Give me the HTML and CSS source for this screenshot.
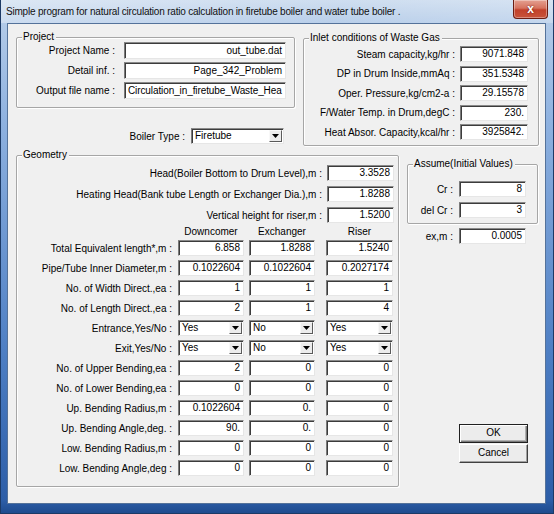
FILE: index.html
```html
<!DOCTYPE html>
<html>
<head>
<meta charset="utf-8">
<title>Natural circulation ratio</title>
<link rel="stylesheet" href="styles.css">
</head>
<body>
<div class="window">
  <div class="titlebar">
    <span class="title">Simple program for natural circulation ratio calculation in firetube boiler and water tube boiler .</span>
    <div class="close"><span>x</span></div>
  </div>
  <div class="client">
    <div class="top">
      <div class="left-col">
        <div class="group project">
          <span class="legend">Project</span>
          <div class="project-form">
            <span class="lbl">Project Name :</span><div class="field">out_tube.dat</div>
            <span class="lbl">Detail inf. :</span><div class="field">Page_342_Problem</div>
            <span class="lbl">Output file name :</span><div class="field left">Circulation_in_firetube_Waste_Hea</div>
          </div>
        </div>
        <div class="boiler-row">
          <span class="lbl">Boiler Type :</span>
          <div class="select boiler"><span class="sel-text">Firetube</span><span class="arrow"><svg width="7" height="4" viewBox="0 0 7 4"><path d="M0 0h7L3.5 4z" fill="#000"/></svg></span></div>
        </div>
      </div>
      <div class="group inlet">
        <span class="legend">Inlet conditions of Waste Gas</span>
        <div class="inlet-form">
          <span class="lbl">Steam capacity,kg/hr :</span><div class="field">9071.848</div>
          <span class="lbl">DP in Drum Inside,mmAq :</span><div class="field">351.5348</div>
          <span class="lbl">Oper. Pressure,kg/cm2-a :</span><div class="field">29.15578</div>
          <span class="lbl">F/Water Temp. in Drum,degC :</span><div class="field">230.</div>
          <span class="lbl">Heat Absor. Capacity,kcal/hr :</span><div class="field">3925842.</div>
        </div>
      </div>
    </div>
    <div class="bottom">
      <div class="group geometry">
        <span class="legend">Geometry</span>
        <div class="heads">
          <div class="head-row"><span class="lbl">Head(Boiler Bottom to Drum Level),m :</span><div class="field hf">3.3528</div></div>
          <div class="head-row"><span class="lbl">Heating Head(Bank tube Length or Exchanger Dia.),m :</span><div class="field hf">1.8288</div></div>
          <div class="head-row"><span class="lbl">Vertical height for riser,m :</span><div class="field hf">1.5200</div></div>
        </div>
        <div class="table">
          <span></span><span class="colh c1">Downcomer</span><span class="colh c2">Exchanger</span><span class="colh c3">Riser</span>

          <span class="lbl">Total Equivalent length*,m :</span><div class="field c1">6.858</div><div class="field c2">1.8288</div><div class="field c3">1.5240</div>
          <span class="lbl">Pipe/Tube Inner Diameter,m :</span><div class="field c1">0.1022604</div><div class="field c2">0.1022604</div><div class="field c3">0.2027174</div>
          <span class="lbl">No. of Width Direct.,ea :</span><div class="field c1">1</div><div class="field c2">1</div><div class="field c3">1</div>
          <span class="lbl">No. of Length Direct.,ea :</span><div class="field c1">2</div><div class="field c2">1</div><div class="field c3">4</div>
          <span class="lbl">Entrance,Yes/No :</span>
          <div class="select c1"><span class="sel-text">Yes</span><span class="arrow"><svg width="7" height="4" viewBox="0 0 7 4"><path d="M0 0h7L3.5 4z" fill="#000"/></svg></span></div>
          <div class="select c2"><span class="sel-text">No</span><span class="arrow"><svg width="7" height="4" viewBox="0 0 7 4"><path d="M0 0h7L3.5 4z" fill="#000"/></svg></span></div>
          <div class="select c3"><span class="sel-text">Yes</span><span class="arrow"><svg width="7" height="4" viewBox="0 0 7 4"><path d="M0 0h7L3.5 4z" fill="#000"/></svg></span></div>
          <span class="lbl">Exit,Yes/No :</span>
          <div class="select c1"><span class="sel-text">Yes</span><span class="arrow"><svg width="7" height="4" viewBox="0 0 7 4"><path d="M0 0h7L3.5 4z" fill="#000"/></svg></span></div>
          <div class="select c2"><span class="sel-text">No</span><span class="arrow"><svg width="7" height="4" viewBox="0 0 7 4"><path d="M0 0h7L3.5 4z" fill="#000"/></svg></span></div>
          <div class="select c3"><span class="sel-text">Yes</span><span class="arrow"><svg width="7" height="4" viewBox="0 0 7 4"><path d="M0 0h7L3.5 4z" fill="#000"/></svg></span></div>
          <span class="lbl">No. of Upper Bending,ea :</span><div class="field c1">2</div><div class="field c2">0</div><div class="field c3">0</div>
          <span class="lbl">No. of Lower Bending,ea :</span><div class="field c1">0</div><div class="field c2">0</div><div class="field c3">0</div>
          <span class="lbl">Up. Bending Radius,m :</span><div class="field c1">0.1022604</div><div class="field c2">0.</div><div class="field c3">0</div>
          <span class="lbl">Up. Bending Angle,deg. :</span><div class="field c1">90.</div><div class="field c2">0.</div><div class="field c3">0</div>
          <span class="lbl">Low. Bending Radius,m :</span><div class="field c1">0</div><div class="field c2">0</div><div class="field c3">0</div>
          <span class="lbl">Low. Bending Angle,deg :</span><div class="field c1">0</div><div class="field c2">0</div><div class="field c3">0</div>
        </div>
      </div>
      <div class="right-col">
        <div class="group assume">
          <span class="legend">Assume(Initial Values)</span>
          <div class="assume-form">
            <span class="lbl">Cr :</span><div class="field">8</div>
            <span class="lbl">del Cr :</span><div class="field">3</div>
          </div>
        </div>
        <div class="ex-row"><span class="lbl">ex,m :</span><div class="field">0.0005</div></div>
        <div class="buttons">
          <div class="btn default">OK</div>
          <div class="btn">Cancel</div>
        </div>
      </div>
    </div>
  </div>
</div>
</body>
</html>
```
FILE: styles.css
```css
html, body {
  margin: 0;
  padding: 0;
  background: #ffffff;
}
body {
  font-family: "Liberation Sans", Arial, sans-serif;
  font-size: 10px;
  color: #000;
}
.window {
  width: 554px;
  height: 514px;
  box-sizing: border-box;
  background: linear-gradient(180deg, #c9daee 0px, #b2cae8 22px, #8fb2e0 120px, #4e7fc4 350px, #2d5ea8 500px, #1d4a8c 514px);
  border-left: 1px solid #1c3a66;
  border-right: 1px solid #1c3a66;
  border-bottom: 1px solid #1c3a66;
  overflow: hidden;
}
.titlebar {
  height: 23px;
  display: flex;
  align-items: flex-start;
  justify-content: space-between;
  background: linear-gradient(90deg, rgba(255,255,255,0.35) 0, rgba(255,255,255,0.1) 60%, rgba(255,255,255,0.25) 100%);
}
.title {
  font-size: 10px;
  letter-spacing: -0.2px;
  color: #111;
  padding: 6px 0 0 5px;
  white-space: nowrap;
}
.close {
  width: 35px;
  height: 19px;
  margin: 0 5px 0 0;
  box-sizing: border-box;
  border: 1px solid #6b1d12;
  border-top: none;
  border-radius: 0 0 4px 4px;
  background: linear-gradient(180deg, #e4a091 0, #d6735f 45%, #c2412a 55%, #c8533a 100%);
  box-shadow: inset 0 0 0 1px rgba(255,255,255,0.35);
  display: flex;
  align-items: center;
  justify-content: center;
}
.close span {
  color: #fff;
  font-weight: bold;
  font-size: 12px;
  line-height: 12px;
  text-shadow: 0 0 2px #5a1208;
  margin-top: -1px;
}
.client {
  margin: 0 7px 0 6px;
  height: 481px;
  box-sizing: border-box;
  border: 1px solid #54729a;
  background: #f0f0f0;
  padding: 13px 0 0 8px;
}
.top {
  display: flex;
  align-items: flex-start;
}
.left-col {
  width: 279px;
}
.group {
  position: relative;
  box-sizing: border-box;
  border: 1px solid #a6a6a6;
  border-radius: 2px;
  box-shadow: inset 1px 1px 0 #fff, 1px 1px 0 #fff;
}
.legend {
  position: absolute;
  top: -7px;
  left: 5px;
  background: #f0f0f0;
  padding: 0 2px 0 1px;
  line-height: 12px;
  white-space: nowrap;
}
.lbl {
  white-space: nowrap;
  text-align: right;
}
.field {
  box-sizing: border-box;
  height: 16px;
  background: #fff;
  border: 1px solid;
  border-color: #8a8a8a #e6e6e6 #e6e6e6 #7a7a7a;
  box-shadow: inset 1px 1px 0 #3c3c3c;
  text-align: right;
  padding: 0 3px 0 4px;
  line-height: 13px;
  white-space: nowrap;
  overflow: hidden;
}
.field.left {
  text-align: left;
  padding: 0 1px 0 3px;
  letter-spacing: -0.1px;
}
.project {
  width: 279px;
  height: 71px;
}
.project-form {
  display: grid;
  grid-template-columns: 98px 162px;
  column-gap: 9px;
  row-gap: 3px;
  align-items: center;
  padding: 4px 0 0 0;
}
.project-form .field {
  height: 17px;
  line-height: 15px;
}
.boiler-row {
  margin-top: 20px;
  display: flex;
  justify-content: flex-end;
  align-items: center;
  gap: 6px;
  padding-right: 11px;
}
.select {
  box-sizing: border-box;
  height: 16px;
  background: #fff;
  border: 1px solid;
  border-color: #8a8a8a #e6e6e6 #e6e6e6 #7a7a7a;
  box-shadow: inset 1px 1px 0 #3c3c3c;
  display: flex;
  align-items: stretch;
  padding: 1px 1px 1px 2px;
}
.select.boiler {
  width: 93px;
  height: 16px;
}
.sel-text {
  flex: 1;
  line-height: 12px;
  padding-left: 1px;
}
.arrow {
  width: 13px;
  box-sizing: border-box;
  background: #ececec;
  border: 1px solid;
  border-color: #f8f8f8 #5a5a5a #5a5a5a #f8f8f8;
  display: flex;
  align-items: center;
  justify-content: center;
}
.inlet {
  width: 236px;
  height: 108px;
  margin: 1px 0 0 8px;
}
.inlet-form {
  display: grid;
  grid-template-columns: 1fr 68px;
  column-gap: 5px;
  row-gap: 3.5px;
  align-items: center;
  padding: 7px 10px 0 0;
}
.bottom {
  display: flex;
  align-items: flex-start;
  margin-top: 9px;
}
.geometry {
  width: 383px;
  height: 332px;
  padding: 9px 4px 0 0;
}
.heads {
  display: flex;
  flex-direction: column;
  gap: 5px;
}
.head-row {
  display: flex;
  justify-content: flex-end;
  align-items: center;
  gap: 5px;
}
.field.hf {
  width: 67px;
}
.table {
  display: grid;
  grid-template-columns: 155px 72px 71px 78px;
  grid-template-rows: 13px;
  grid-auto-rows: 16px;
  row-gap: 4px;
  align-items: center;
}
.table .colh {
  text-align: center;
  align-self: start;
  line-height: 12px;
  padding-top: 3px;
}
.table .colh.c1 { padding-left: 6px; }
.table .colh.c2 { padding-left: 5px; }
.table .colh.c3 { padding-left: 11px; }
.table .field, .table .select {
  justify-self: end;
}
.table .c1 { width: 66px; }
.table .c2 { width: 66px; }
.table .c3 { width: 67px; }
.table .colh.c1, .table .colh.c2, .table .colh.c3 { width: auto; justify-self: stretch; }
.right-col {
  margin-left: 8px;
  width: 131px;
}
.assume {
  width: 131px;
  height: 60px;
  margin-top: 9px;
}
.assume-form {
  display: grid;
  grid-template-columns: 1fr 67px;
  column-gap: 6px;
  row-gap: 5px;
  align-items: center;
  padding: 16px 11px 0 0;
}
.ex-row {
  margin-top: 4px;
  display: flex;
  justify-content: flex-end;
  align-items: center;
  gap: 6px;
  padding-right: 12px;
}
.ex-row .field {
  width: 67px;
}
.buttons {
  margin: 180px 0 0 52px;
  display: flex;
  flex-direction: column;
  gap: 1px;
}
.btn {
  width: 69px;
  height: 19px;
  box-sizing: border-box;
  background: #ececec;
  border: 1px solid;
  border-color: #ffffff #404040 #404040 #ffffff;
  box-shadow: inset -1px -1px 0 #a0a0a0;
  text-align: center;
  line-height: 16px;
}
.btn.default {
  border: 1px solid #202020;
  box-shadow: inset 1px 1px 0 #fff, inset -1px -1px 0 #7a7a7a, inset -2px -2px 0 #b0b0b0;
}
```
